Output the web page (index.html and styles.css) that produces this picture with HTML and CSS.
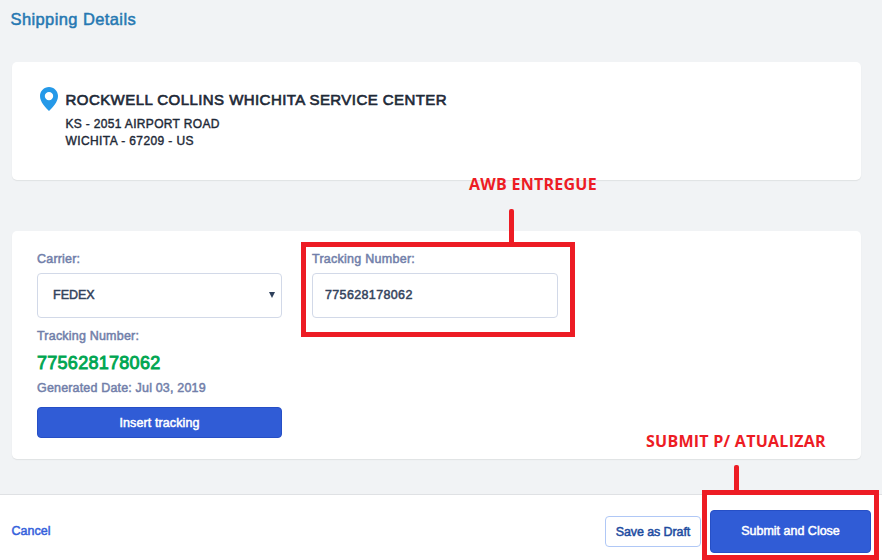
FILE: index.html
```html
<!DOCTYPE html>
<html lang="en">
<head>
<meta charset="utf-8">
<title>Shipping Details</title>
<link rel="stylesheet" href="styles.css">
</head>
<body>
<main>
  <h1>Shipping Details</h1>
  <section class="card address">
    <svg class="pin" viewBox="0 0 18 24" width="18" height="24"><path fill="#2599e8" fill-rule="evenodd" d="M9 0C4 0 0 4 0 9c0 3 1.300 5.700 3.200 8.600C5 20.200 7 22.200 9 24c2-1.800 4-3.800 5.800-6.400C16.700 14.700 18 12 18 9c0-5-4-9-9-9zm0 4.900a4.200 4.200 0 1 1 0 8.400 4.200 4.200 0 0 1 0-8.400z"/></svg>
    <div>
      <h2>ROCKWELL COLLINS WHICHITA SERVICE CENTER</h2>
      <p>KS - 2051 AIRPORT ROAD</p>
      <p class="city">WICHITA - 67209 - US</p>
    </div>
  </section>
  <section class="card tracking">
    <div class="field">
      <label>Carrier:</label>
      <div class="control select"><span>FEDEX</span><svg width="6" height="6" viewBox="0 0 6 6"><path d="M0 0h6L3 6z" fill="#2e405c"/></svg></div>
      <div class="label second">Tracking Number:</div>
      <strong class="number">775628178062</strong>
      <div class="label date">Generated Date: Jul 03, 2019</div>
      <button class="insert">Insert tracking</button>
    </div>
    <div class="field wide">
      <label>Tracking Number:</label>
      <div class="control value">775628178062</div>
      <div class="frame frame-input"></div>
    </div>
  </section>
</main>
<footer>
  <a class="cancel">Cancel</a>
  <button class="draft">Save as Draft</button>
  <button class="submit">Submit and Close</button>
</footer>
<div class="note note-awb">AWB ENTREGUE</div>
<div class="line line-awb"></div>
<div class="note note-submit">SUBMIT P/ ATUALIZAR</div>
<div class="line line-submit"></div>
<div class="frame frame-submit"></div>
</body>
</html>
```
FILE: styles.css
```css
* { box-sizing: border-box; }
body {
  position: relative;
  display: flex;
  flex-direction: column;
  width: 882px;
  height: 560px;
  margin: 0;
  overflow: hidden;
  background: #f1f3f5;
  color: #1e2937;
  font-family: "Liberation Sans", Arial, sans-serif;
  font-size: 12.5px;
  -webkit-text-stroke: 0.5px currentColor;
}
h1, h2, p { margin: 0; font-weight: 400; }
main { height: 494px; padding: 9px 21.5px 0 11.5px; }
h1 { height: 53px; margin-left: -1px; color: #2678b2; font-size: 16.5px; line-height: 21px; letter-spacing: 0.4px; }
.card { background: #fff; border-radius: 5px; box-shadow: 0 1px 1px rgba(40, 50, 60, 0.09); }
.address { display: flex; gap: 7.5px; height: 118px; padding: 25px 27.5px; }
.pin { margin-left: 1px; }
h2 { height: 28px; font-size: 15px; line-height: 26px; letter-spacing: 0.44px; -webkit-text-stroke-width: 0.65px; }
.address p { position: relative; top: 1px; font-size: 12px; line-height: 17px; letter-spacing: 0.33px; -webkit-text-stroke-width: 0.4px; }
.address .city { letter-spacing: 0.4px; }
.tracking { display: flex; gap: 30px; height: 228px; margin-top: 51px; padding: 20px 25.5px; }
.field { position: relative; width: 245px; }
.wide { width: 246px; }
label, .label { display: block; height: 22px; line-height: 16px; color: #727faa; letter-spacing: 0.2px; }
.wide label { letter-spacing: 0.26px; }
.control { display: flex; align-items: center; height: 45px; padding: 0 6px 2px 13px; border: 1px solid #d2d9e8; border-radius: 4px; color: #34435c; }
.select { justify-content: space-between; padding-left: 15px; }
.value { padding-left: 12px; letter-spacing: 0.36px; }
.second { margin-top: 10px; height: 19px; }
.number { display: block; height: 33px; color: #00a651; font-size: 18px; font-weight: 400; line-height: 33px; letter-spacing: 0.28px; -webkit-text-stroke-width: 0.9px; }
.date { height: 27px; line-height: 16px; letter-spacing: 0.17px; }
button { font: inherit; -webkit-text-stroke: 0.5px currentColor; border: 1px solid #264fc6; border-radius: 4px; padding: 0 0 1px; background: #305cd6; color: #fff; }
.insert { display: block; width: 245px; height: 31px; padding: 0; letter-spacing: 0.1px; }
footer { display: flex; align-items: center; height: 66px; padding: 8px 11px 0 11.5px; background: #fff; border-top: 1px solid #dfe1e4; }
.cancel { margin: 0 auto 2px 0; color: #3562dc; }
.draft { width: 96px; height: 31px; padding: 0; letter-spacing: -0.1px; background: #fff; border-color: #b0c8f6; color: #1d4b9f; }
.submit { width: 161px; height: 43px; margin-left: 9px; }
.note, .line, .frame { position: absolute; }
.note { color: #ed1c24; font-family: "Open Sans", sans-serif; font-size: 16px; font-weight: 700; line-height: 20px; letter-spacing: 0.26px; white-space: nowrap; -webkit-text-stroke: 0; }
.note-awb { left: 469px; top: 174px; }
.note-submit { left: 646px; top: 431px; }
.line { width: 5px; background: #ed1c24; border-radius: 2px 2px 0 0; }
.line-awb { left: 509px; top: 209px; height: 35px; }
.line-submit { left: 734px; top: 465px; height: 27px; }
.frame { border: 5px solid #ed1c24; }
.frame-input { left: -11px; top: -9px; width: 274px; height: 95px; }
.frame-submit { left: 702px; top: 490px; width: 177px; height: 70px; }
```
